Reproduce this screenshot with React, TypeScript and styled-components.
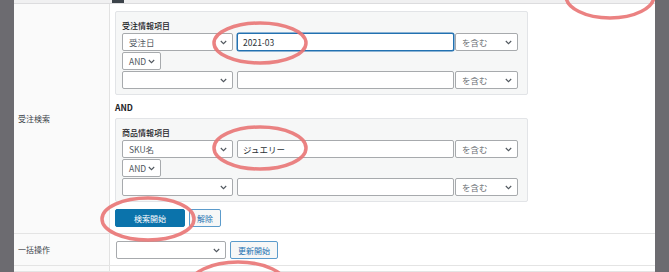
import React from "react";
import styled, { createGlobalStyle } from "styled-components";

const GlobalStyle = createGlobalStyle`
  html, body {
    margin: 0;
    padding: 0;
    background: #ffffff;
  }
  * {
    box-sizing: border-box;
  }
`;

const Page = styled.div`
  position: relative;
  display: flex;
  flex-direction: row;
  width: 669px;
  height: 272px;
  overflow: hidden;
  background: #ffffff;
  font-family: "Noto Sans CJK JP", "Noto Sans", sans-serif;
  color: #3c434a;
`;

const SideStrip = styled.div`
  width: 14px;
  flex-shrink: 0;
  background: #6c6b70;
`;

const Main = styled.div`
  flex: 1;
  display: flex;
  flex-direction: column;
  min-width: 0;
`;

const TopBand = styled.div`
  height: 4px;
  flex-shrink: 0;
  background: #f0f0f1;
  border-bottom: 1px solid #dcdcde;
  padding-left: 98px;
`;

const TopMarker = styled.div`
  width: 12px;
  height: 3px;
  background: #3c434a;
`;

const Row = styled.div<{ $grow?: boolean }>`
  display: flex;
  flex-direction: row;
  border-bottom: 1px solid #e4e4e4;
  flex: ${(p) => (p.$grow ? "1" : "none")};
`;

const LabelCell = styled.div`
  width: 96px;
  flex-shrink: 0;
  display: flex;
  align-items: center;
  padding-left: 4px;
  background: #fafafa;
  border-right: 1px solid #e2e2e2;
  font-size: 8px;
  color: #3c434a;
`;

const ContentCell = styled.div<{ $pad: string }>`
  flex: 1;
  display: flex;
  flex-direction: column;
  align-items: flex-start;
  padding: ${(p) => p.$pad};
`;

const Panel = styled.div`
  width: 413px;
  display: flex;
  flex-direction: column;
  gap: 1px;
  padding: 7px 8px 5px 6px;
  background: #f6f7f7;
  border: 1px solid #e2e4e7;
  border-radius: 2px;
`;

const PanelTitle = styled.div`
  font-size: 8px;
  line-height: 13px;
  font-weight: 500;
  color: #1d2327;
`;

const FieldRow = styled.div`
  display: flex;
  flex-direction: row;
  align-items: center;
  height: 18px;
`;

const SelectBox = styled.div<{ $w: number; $mr?: number; $muted?: boolean }>`
  width: ${(p) => p.$w}px;
  height: 18px;
  margin-right: ${(p) => p.$mr ?? 0}px;
  display: flex;
  align-items: center;
  justify-content: space-between;
  padding: 0 5px 0 6px;
  background: #ffffff;
  border: 1px solid #a7aaad;
  border-radius: 2px;
  font-size: 8.5px;
  color: ${(p) => (p.$muted ? "#6b7075" : "#50575e")};
  flex-shrink: 0;
`;

const TextInput = styled.div<{ $focused?: boolean }>`
  width: 217px;
  height: 18px;
  margin-right: 1px;
  display: flex;
  align-items: center;
  padding: 0 5px;
  background: #ffffff;
  border: 1px solid ${(p) => (p.$focused ? "#2271b1" : "#a7aaad")};
  box-shadow: ${(p) => (p.$focused ? "0 0 0 0.5px #2271b1" : "none")};
  border-radius: 2px;
  font-size: 8.5px;
  color: #2c3338;
  flex-shrink: 0;
`;

const Conjunction = styled.div`
  height: 23px;
  display: flex;
  align-items: center;
  font-size: 8.5px;
  font-weight: 700;
  color: #1d2327;
`;

const ButtonRow = styled.div`
  display: flex;
  flex-direction: row;
  gap: 4px;
  margin-top: 7px;
`;

const Button = styled.div<{ $primary?: boolean; $w?: number }>`
  height: 18px;
  width: ${(p) => (p.$w ? `${p.$w}px` : "auto")};
  display: flex;
  align-items: center;
  justify-content: center;
  padding: 0 7px;
  border-radius: 2px;
  font-size: 8px;
  background: ${(p) => (p.$primary ? "#0b73ab" : "#f6f7f7")};
  color: ${(p) => (p.$primary ? "#ffffff" : "#2271b1")};
  border: 1px solid ${(p) => (p.$primary ? "#0b73ab" : "#5b9bcb")};
`;

const InlineRow = styled.div`
  display: flex;
  flex-direction: row;
  align-items: center;
  gap: 4px;
`;

const Overlay = styled.svg`
  position: absolute;
  left: 0;
  top: 0;
  pointer-events: none;
`;

const Chevron = () => (
  <svg width="7" height="5" viewBox="0 0 7 5">
    <path d="M0.8 1l2.7 2.7L6.2 1" fill="none" stroke="#50575e" strokeWidth="1.1" />
  </svg>
);

const Select: React.FC<{ w: number; mr?: number; value?: string; muted?: boolean }> = ({
  w,
  mr,
  value,
  muted,
}) => (
  <SelectBox $w={w} $mr={mr} $muted={muted}>
    <span>{value}</span>
    <Chevron />
  </SelectBox>
);

const ConditionPanel: React.FC<{ title: string; field: string; keyword: string; focused?: boolean }> = (
  props
) => (
  <Panel>
    <PanelTitle>{props.title}</PanelTitle>
    <FieldRow>
      <Select w={111} mr={4} value={props.field} />
      <TextInput $focused={props.focused}>{props.keyword}</TextInput>
      <Select w={63} value="を含む" muted />
    </FieldRow>
    <FieldRow>
      <Select w={39} value="AND" />
    </FieldRow>
    <FieldRow>
      <Select w={111} mr={4} />
      <TextInput />
      <Select w={63} value="を含む" muted />
    </FieldRow>
  </Panel>
);

const annotations = [
  { cx: 260, cy: 43, rx: 46, ry: 20 },
  { cx: 610, cy: -4, rx: 44, ry: 22 },
  { cx: 260, cy: 148, rx: 46, ry: 21 },
  { cx: 148, cy: 219, rx: 46, ry: 21 },
  { cx: 238, cy: 285, rx: 48, ry: 23 },
];

const App = () => {
  return (
    <>
      <GlobalStyle />
      <Page>
        <SideStrip />
        <Main>
          <TopBand>
            <TopMarker />
          </TopBand>
          <Row>
            <LabelCell>受注検索</LabelCell>
            <ContentCell $pad="7px 0 6px 5px">
              <ConditionPanel title="受注情報項目" field="受注日" keyword="2021-03" focused />
              <Conjunction>AND</Conjunction>
              <ConditionPanel title="商品情報項目" field="SKU名" keyword="ジュエリー" />
              <ButtonRow>
                <Button $primary $w={70}>
                  検索開始
                </Button>
                <Button>解除</Button>
              </ButtonRow>
            </ContentCell>
          </Row>
          <Row>
            <LabelCell>一括操作</LabelCell>
            <ContentCell $pad="7px 0 6px 6px">
              <InlineRow>
                <Select w={110} />
                <Button>更新開始</Button>
              </InlineRow>
            </ContentCell>
          </Row>
          <Row $grow>
            <LabelCell />
            <ContentCell $pad="0" />
          </Row>
        </Main>
        <SideStrip />
        <Overlay width="669" height="272" viewBox="0 0 669 272">
          {annotations.map((a, i) => (
            <ellipse
              key={i}
              cx={a.cx}
              cy={a.cy}
              rx={a.rx}
              ry={a.ry}
              fill="none"
              stroke="#e97474"
              strokeOpacity="0.9"
              strokeWidth="3.5"
            />
          ))}
        </Overlay>
      </Page>
    </>
  );
};

export default App;
